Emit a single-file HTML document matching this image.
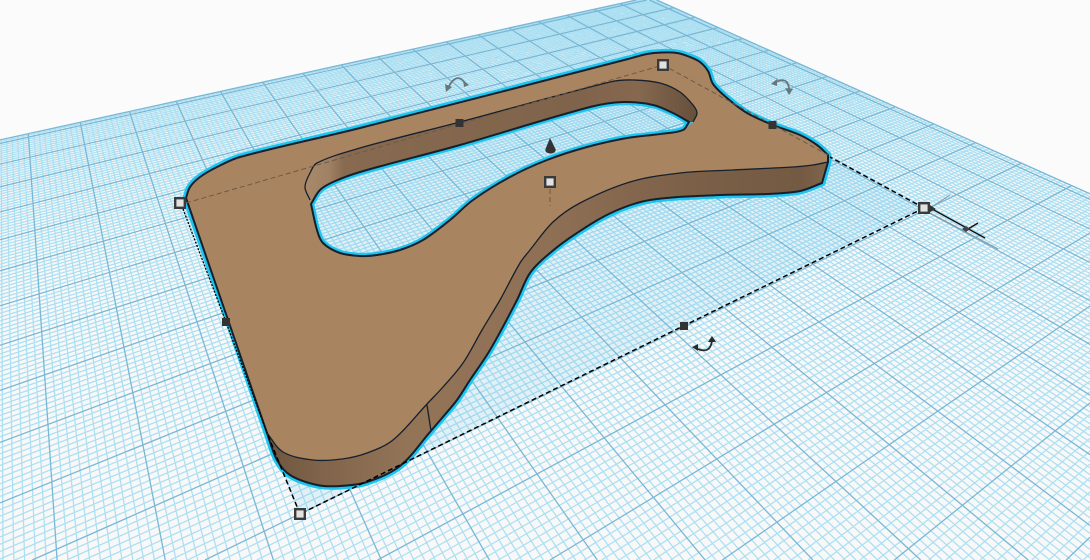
<!DOCTYPE html>
<html><head><meta charset="utf-8"><style>
html,body{margin:0;padding:0;width:1090px;height:560px;overflow:hidden;background:#fbfbfb}
svg{display:block}
</style></head><body>
<svg id="top" width="1090" height="560" viewBox="0 0 1090 560" xmlns="http://www.w3.org/2000/svg" style="overflow:hidden">
<defs>
<linearGradient id="w1" gradientUnits="userSpaceOnUse" x1="267" y1="0" x2="828" y2="0">
<stop offset="0" stop-color="#6f563f"/><stop offset=".1" stop-color="#80644b"/><stop offset=".25" stop-color="#937457"/><stop offset=".5" stop-color="#8f7055"/><stop offset=".75" stop-color="#7c6048"/><stop offset=".95" stop-color="#745a43"/><stop offset="1" stop-color="#80654c"/>
</linearGradient>
<linearGradient id="w2" gradientUnits="userSpaceOnUse" x1="305" y1="0" x2="697" y2="0">
<stop offset="0" stop-color="#a88a6b"/><stop offset=".06" stop-color="#a08163"/><stop offset=".1" stop-color="#876a50"/><stop offset=".7" stop-color="#7f634a"/><stop offset=".85" stop-color="#86684f"/><stop offset="1" stop-color="#65503c"/>
</linearGradient>
</defs>
<path d="M0 140L637 0H657L1090 193V560H0Z" fill="#f8f8f8"/>
<path id="gmi" fill="none" stroke="#abdff2" stroke-width="1.25"/>
<path id="gma" fill="none" stroke="#78b8d6" stroke-width="1.3"/>
<polygon points="180,203 663,65 924,208 300,514" fill="#5abeeb" fill-opacity=".14"/>
<path id="cO" fill="none" stroke="#1cc4f0" stroke-width="7" stroke-linejoin="round"/>
<path id="cF" fill="none" stroke="#1cc4f0" stroke-width="6.5" stroke-linejoin="round"/>
<path id="face" fill-rule="evenodd" fill="#a88460"/>
<path id="wh" fill="url(#w2)"/>
<path id="wf" fill="url(#w1)"/>
<g fill="none" stroke-linejoin="round" stroke="#16202c">
<path id="lO" stroke-width="2"/>
<path id="lFE" stroke-width="1.3"/>
<path d="M427 405L431 431" stroke-width="1.3"/>
<path id="lHU" stroke-width="1.3"/>
<path id="lF" stroke-width="2"/>
</g>
<g fill="none" stroke="#6e5a48" stroke-width="1" stroke-dasharray="5 3">
<path d="M186 203L663 65 828 155"/>
<path d="M550 189V206"/>
</g>
<g fill="none" stroke="#000" stroke-width="1.5" stroke-dasharray="5 3">
<path d="M924 208L300 514"/>
<path d="M300 514L267 433"/>
<path d="M924 208L830 157"/>
</g>
<path d="M183 209L226 322 267 433" fill="none" stroke="#000" stroke-width="1.3" stroke-dasharray="2 1.5"/>
<path d="M930 213L998 249M930 208L950 195" stroke="#7f97a3" stroke-width="1" fill="none"/>
<path d="M932 209L985 238M968 229L978 223" stroke="#111" stroke-width="1.4" fill="none"/>
<path d="M930 205L936 209 930 212Z" fill="#333"/>
<path d="M962 229L966 226 970 229 966 232Z" fill="#444"/>
<path d="M550 138L545.500 149Q544.500 153 550.500 153.500 556.500 153 555.500 149Z" fill="#333"/>
<g fill="none" stroke="#66777e" stroke-width="1.8"><path d="M449 86Q457 72 465 83"/><path d="M776 82Q788 76 789 89"/></g>
<g fill="#66777e"><path d="M446 92L445 84 452 87Z"/><path d="M469 85L463 80 464 87Z"/><path d="M771 84L777 79 777 86Z"/><path d="M789 95L785 88 793 89Z"/></g>
<path d="M698 349Q710 354 712 341" fill="none" stroke="#2a2a2a" stroke-width="1.8"/>
<path d="M692 347L698 344 698 351ZM712 336L708 342 716 342Z" fill="#2a2a2a"/>
<g fill="#333"><rect x="455.500" y="119" width="8" height="8"/><rect x="768.500" y="121" width="8" height="8"/><rect x="222" y="318" width="8" height="8"/><rect x="680" y="322" width="8" height="8"/></g>
<g fill="#e2e2e2" stroke="#3a3a3a" stroke-width="2.400">
<rect x="175.200" y="198.200" width="9.600" height="9.600"/>
<rect x="658.200" y="60.200" width="9.600" height="9.600"/>
<rect x="545.200" y="177.200" width="9.600" height="9.600"/>
<rect x="919.200" y="203.200" width="9.600" height="9.600"/>
<rect x="295.200" y="509.200" width="9.600" height="9.600"/>
</g>
</svg>
<script>
(function(){
function P(a,b){var w=1+.04876*a-.07745*b;return [(95.19*a+.045*b+716.7)/w,(-14.11*a+22.77*b+459)/w];}
function L(p,q){var t0=0,t1=1,dx=q[0]-p[0],dy=q[1]-p[1],c=[[-dx,p[0]],[dx,1090-p[0]],[-dy,p[1]],[dy,560-p[1]]],i;
for(i=0;i<4;i++){var f=c[i][0],g=c[i][1];if(f===0){if(g<0)return '';}else{var r=g/f;if(f<0){if(r>t1)return '';if(r>t0)t0=r;}else{if(r<t0)return '';if(r<t1)t1=r;}}}
if(t1<=t0)return '';
return 'M'+(p[0]+t0*dx).toFixed(2)+' '+(p[1]+t0*dy).toFixed(2)+'L'+(p[0]+t1*dx).toFixed(2)+' '+(p[1]+t1*dy).toFixed(2);}
var A0=-9,A1=10.2,B0=-14.18,B1=5,mi='',ma='',i;
for(i=-90;i<=102;i++){var s=L(P(i/10,B0),P(i/10,B1));if(i%10)mi+=s;else ma+=s;}
for(i=-141;i<=50;i++){var t=L(P(A0,i/10),P(A1,i/10));if(i%10)mi+=t;else ma+=t;}
ma+=L(P(A0,B0),P(A1,B0))+L(P(A1,B0),P(A1,B1));
function $(id){return document.getElementById(id);}
$('gmi').setAttribute('d',mi);$('gma').setAttribute('d',ma);
function C(p){var r='',n=p.length/2,k;function g(j){j=Math.max(0,Math.min(n-1,j));return [p[2*j],p[2*j+1]];}
function u(q,v){var x=v[0]-q[0],y=v[1]-q[1],l=Math.sqrt(x*x+y*y)||1;return [x/l,y/l];}
for(k=0;k<n-1;k++){var a=g(k),b=g(k+1),l=Math.sqrt(Math.pow(b[0]-a[0],2)+Math.pow(b[1]-a[1],2))/3,t1=u(g(k-1),b),t2=u(a,g(k+2));
r+='C'+(a[0]+t1[0]*l).toFixed(1)+' '+(a[1]+t1[1]*l).toFixed(1)+' '+(b[0]-t2[0]*l).toFixed(1)+' '+(b[1]-t2[1]*l).toFixed(1)+' '+b[0]+' '+b[1];}
return r;}
function R(p){var o=[];for(var i=p.length-2;i>=0;i-=2)o.push(p[i],p[i+1]);return o;}
var T=[186,198,190,187,200,177,217,167,240,157,360,128,628,59,647,54,662,52.5,677,53,690,57,700,62,708,71,713,84,727,98,747,113,773,125,800,135,817,145,828,155];
var B=[822,183,800,191,767,194,720,195,650,200,613,212,577,233,550,253,530,273,517,300,490,350,470,380,457,400,442,418,430,432,400,466,367,482,340,486,317,485,290,475,277,460,267,433];
var FE=[828,162,813,165,793,167,733,170,680,173,630,182,580,203,553,222,530,250,520,263,500,300,482,330,463,363,443,387,427,404];
var FE2=[427,404,393,440,367,453,342,459,313,460,283,452,267,433];
var HU=[310,200,305,187,310,173,317,163,360,148,460,122,610,82,633,80,660,83,680,92,693,105,697,113,693,122];
var HL=[693,122,683,130,660,134,627,138,587,147,547,160,510,177,473,200,450,220,423,240,400,250,377,255,360,256,340,253,323,243,317,230,310,200];
var WB=[311,204,320,190,333,182,360,172,460,145,590,107,623,102,653,105,673,113,689,122];
var HL2=[689,122,683,130,660,134,627,138,587,147,547,160,510,177,473,200,450,220,423,240,400,250,377,255,360,256,340,253,323,243,317,230,311,204];
var O='M186 198'+C(T)+'L828 162L822 183'+C(B)+'Z';
var F='M311 204'+C(WB)+C(HL2)+'Z';
var H='M310 200'+C(HU)+C(HL)+'Z';
var FEp=C(FE)+C(FE2);
$('cO').setAttribute('d',O);$('cF').setAttribute('d',F);
$('face').setAttribute('d','M186 198'+C(T)+'L828 162'+FEp+'Z'+H);
$('wh').setAttribute('d','M310 200'+C(HU)+'L689 122'+C(R(WB))+'Z');
$('wf').setAttribute('d','M828 162'+FEp+C(R(B))+'Z');
$('lO').setAttribute('d',O);
$('lFE').setAttribute('d','M828 162'+FEp);
$('lHU').setAttribute('d','M310 200'+C(HU));
$('lF').setAttribute('d',F);
})();
</script>
</body></html>
